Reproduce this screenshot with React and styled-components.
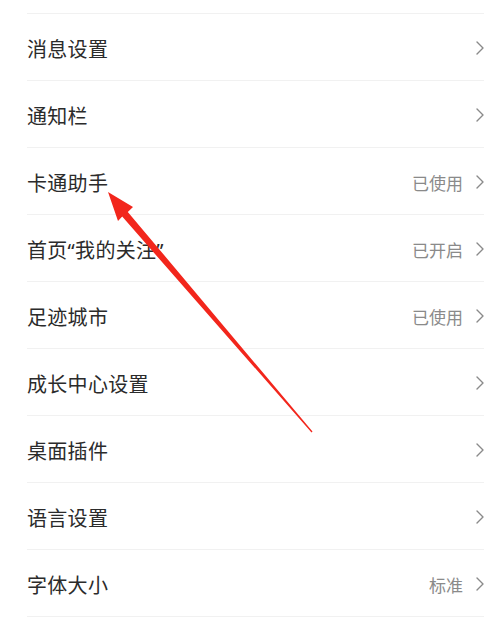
import styled, { createGlobalStyle } from 'styled-components';

const GlobalStyle = createGlobalStyle`
    html, body {
        margin: 0;
        padding: 0;
        background: #ffffff;
        overflow: hidden;
    }
    body {
        font-family: "Noto Sans", "Noto Sans CJK SC", sans-serif;
    }
`;

const items = [
    { label: '消息设置' },
    { label: '通知栏' },
    { label: '卡通助手', value: '已使用' },
    { label: '首页“我的关注”', value: '已开启' },
    { label: '足迹城市', value: '已使用' },
    { label: '成长中心设置' },
    { label: '桌面插件' },
    { label: '语言设置' },
    { label: '字体大小', value: '标准' },
];

const Chevron = () => (
    <ChevronIcon viewBox="0 0 8 14" width="8" height="14">
        <path d="M1 1 L7 7 L1 13" fill="none" stroke="#8a8a8a" strokeWidth="1.4" strokeLinecap="round" strokeLinejoin="round" />
    </ChevronIcon>
);

const App = () => {
    return (
        <Page>
            <GlobalStyle />
            <List>
                <TopSpacer />
                {items.map((item) => (
                    <Row key={item.label}>
                        <Label>{item.label}</Label>
                        <Right>
                            {item.value && <Value>{item.value}</Value>}
                            <Chevron />
                        </Right>
                    </Row>
                ))}
            </List>
            {/* red annotation arrow drawn over the list */}
            <Arrow viewBox="0 0 484 630" width="484" height="630">
                <polygon
                    fill="#f2261c"
                    points="108,192 133,207 127.8,211.9 312.5,431.6 311.5,432.4 122.2,216.6 118,221"
                />
            </Arrow>
        </Page>
    );
};

const Page = styled.div`
    position: relative;
    width: 484px;
    height: 630px;
    overflow: hidden;
    background: #fff;
`;

const List = styled.div`
    display: flex;
    flex-direction: column;
    padding-left: 27px;
`;

const TopSpacer = styled.div`
    height: 13px;
    border-bottom: 1px solid #f1f1f1;
`;

const Row = styled.div`
    height: 66px;
    border-bottom: 1px solid #f1f1f1;
    display: flex;
    align-items: center;
    justify-content: space-between;
`;

const Label = styled.span`
    font-size: 20px;
    color: #2b2b2b;
    letter-spacing: 0.3px;
    margin-top: 3px;
`;

const Right = styled.div`
    display: flex;
    align-items: center;
    gap: 13px;
    margin-top: 2px;
`;

const Value = styled.span`
    font-size: 17px;
    color: #8a8a8a;
`;

const ChevronIcon = styled.svg`
    display: block;
`;

const Arrow = styled.svg`
    position: absolute;
    top: 0;
    left: 0;
    pointer-events: none;
`;

export default App;
